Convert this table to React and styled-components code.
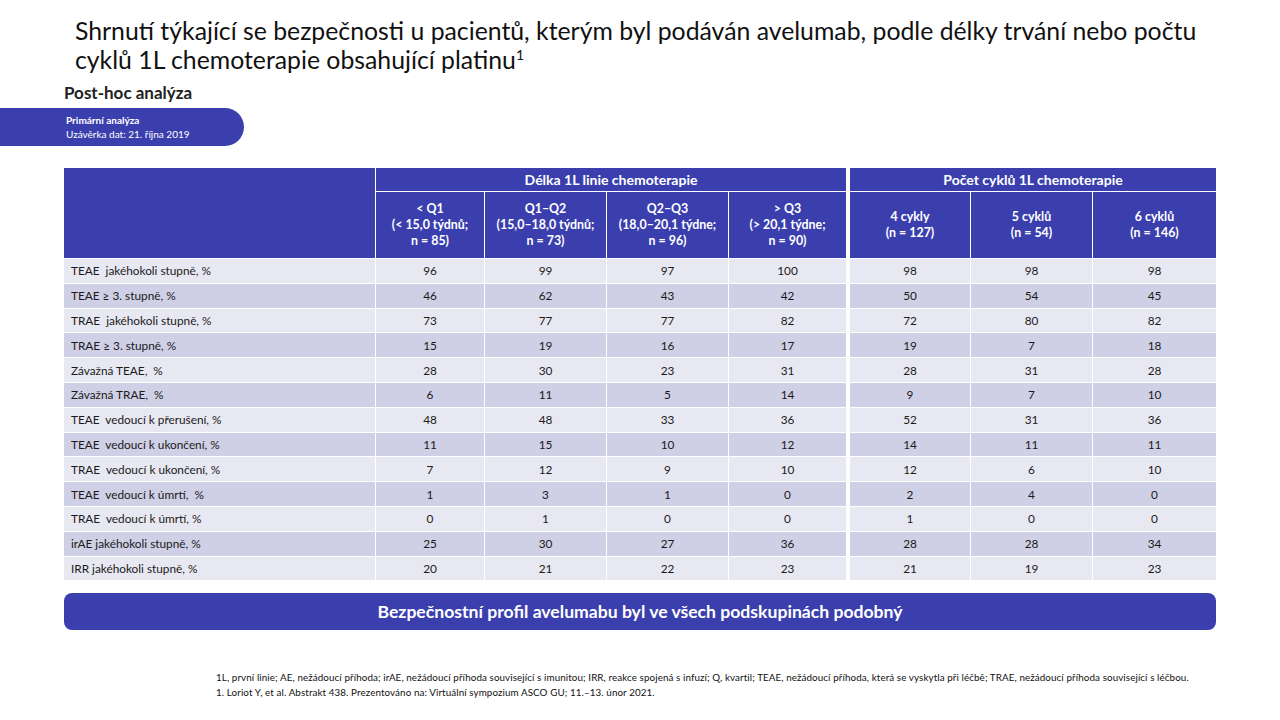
import React from 'react';
import styled, { createGlobalStyle } from 'styled-components';

const BLUE = '#3b3fae';

const GlobalStyle = createGlobalStyle`
  html, body {
    margin: 0;
    padding: 0;
    background: #fff;
  }
  body {
    font-family: Lato, "Open Sans", sans-serif;
    color: #111;
  }
`;

const Slide = styled.div`
  width: 1280px;
  height: 720px;
  position: relative;
  overflow: hidden;
  display: flex;
  flex-direction: column;
`;

const Title = styled.h1`
  margin: 16px 0 0 75px;
  font-weight: 400;
  font-size: 24.8px;
  line-height: 29px;
  white-space: nowrap;
  color: #111;

  sup {
    font-size: 14px;
    line-height: 0;
    vertical-align: 9px;
  }
`;

const Subtitle = styled.div`
  margin: 8px 0 0 64px;
  font-weight: 700;
  font-size: 17px;
  line-height: 22px;
  color: #222;
`;

const Pill = styled.div`
  margin-top: 4px;
  width: 244px;
  height: 38px;
  box-sizing: border-box;
  padding: 5px 0 0 66px;
  background: ${BLUE};
  border-radius: 0 19px 19px 0;
  color: #fff;
  font-size: 10px;
  line-height: 14px;

  b {
    font-weight: 700;
  }
`;

const Table = styled.div`
  margin: 22px 0 0 64px;
  width: 1152px;
  display: grid;
  grid-template-columns: 311px 108px 121px 121px 117px 2px 120px 121px 123px;
  grid-template-rows: 23px 66px repeat(13, 23.8px);
  gap: 1px;
  background: #fff;
`;

const HeadCell = styled.div`
  background: ${BLUE};
  color: #fff;
  font-weight: 700;
  font-size: ${p => (p.$group ? '14px' : '12.4px')};
  line-height: 16px;
  display: flex;
  align-items: center;
  justify-content: center;
  text-align: center;
  white-space: nowrap;
  grid-column: ${p => p.$col || 'auto'};
  grid-row: ${p => p.$row || 'auto'};
`;

const Spacer = styled.div`
  background: #fff;
  grid-column: ${p => p.$col || 'auto'};
  grid-row: ${p => p.$row || 'auto'};
`;

const Cell = styled.div`
  background: ${p => (p.$alt ? '#cfcfe5' : '#e8e8f2')};
  font-size: 11.8px;
  color: #1a1a1a;
  display: flex;
  align-items: center;
  justify-content: ${p => (p.$label ? 'flex-start' : 'center')};
  padding-left: ${p => (p.$label ? '7px' : '0')};
  white-space: pre;
`;

const Banner = styled.div`
  margin: 13px 0 0 64px;
  width: 1152px;
  height: 37px;
  border-radius: 8px;
  background: ${BLUE};
  color: #fff;
  font-weight: 700;
  font-size: 17.6px;
  display: flex;
  align-items: center;
  justify-content: center;
`;

const Notes = styled.div`
  margin: 40px 0 0 216px;
  font-size: 9.8px;
  line-height: 15px;
  color: #111;
  letter-spacing: 0.1px;
  white-space: nowrap;
`;

const rows = [
  ['TEAE  jakéhokoli stupně, %', 96, 99, 97, 100, 98, 98, 98],
  ['TEAE \u2265 3. stupně, %', 46, 62, 43, 42, 50, 54, 45],
  ['TRAE  jakéhokoli stupně, %', 73, 77, 77, 82, 72, 80, 82],
  ['TRAE \u2265 3. stupně, %', 15, 19, 16, 17, 19, 7, 18],
  ['Závažná TEAE,  %', 28, 30, 23, 31, 28, 31, 28],
  ['Závažná TRAE,  %', 6, 11, 5, 14, 9, 7, 10],
  ['TEAE  vedoucí k přerušení, %', 48, 48, 33, 36, 52, 31, 36],
  ['TEAE  vedoucí k ukončení, %', 11, 15, 10, 12, 14, 11, 11],
  ['TRAE  vedoucí k ukončení, %', 7, 12, 9, 10, 12, 6, 10],
  ['TEAE  vedoucí k úmrtí,  %', 1, 3, 1, 0, 2, 4, 0],
  ['TRAE  vedoucí k úmrtí, %', 0, 1, 0, 0, 1, 0, 0],
  ['irAE jakéhokoli stupně, %', 25, 30, 27, 36, 28, 28, 34],
  ['IRR jakéhokoli stupně, %', 20, 21, 22, 23, 21, 19, 23],
];

const durationCols = [
  ['< Q1', '(< 15,0 týdnů;', 'n = 85)'],
  ['Q1\u2013Q2', '(15,0\u201318,0 týdnů;', 'n = 73)'],
  ['Q2\u2013Q3', '(18,0\u201320,1 týdne;', 'n = 96)'],
  ['> Q3', '(> 20,1 týdne;', 'n = 90)'],
];

const cycleCols = [
  ['4 cykly', '(n = 127)'],
  ['5 cyklů', '(n = 54)'],
  ['6 cyklů', '(n = 146)'],
];

function Lines({ lines }) {
  return (
    <div>
      {lines.map((l, i) => (
        <div key={i}>{l}</div>
      ))}
    </div>
  );
}

export default function App() {
  return (
    <>
      <GlobalStyle />
      <Slide>
        <Title>
          Shrnutí týkající se bezpečnosti u pacientů, kterým byl podáván avelumab, podle délky trvání nebo počtu
          <br />
          cyklů 1L chemoterapie obsahující platinu<sup>1</sup>
        </Title>
        <Subtitle>Post-hoc analýza</Subtitle>
        <Pill>
          <b>Primární analýza</b>
          <div>Uzávěrka dat: 21. října 2019</div>
        </Pill>

        <Table>
          <HeadCell $col="1" $row="1 / span 2" />
          <HeadCell $group $col="2 / span 4" $row="1">Délka 1L linie chemoterapie</HeadCell>
          <Spacer $col="6" $row="1 / span 2" />
          <HeadCell $group $col="7 / span 3" $row="1">Počet cyklů 1L chemoterapie</HeadCell>
          {durationCols.map((c, i) => (
            <HeadCell key={'d' + i} $col={String(2 + i)} $row="2">
              <Lines lines={c} />
            </HeadCell>
          ))}
          {cycleCols.map((c, i) => (
            <HeadCell key={'c' + i} $col={String(7 + i)} $row="2">
              <Lines lines={c} />
            </HeadCell>
          ))}
          {rows.map((r, i) => {
            const alt = i % 2 === 1;
            return (
              <React.Fragment key={i}>
                <Cell $label $alt={alt}>{r[0]}</Cell>
                {r.slice(1, 5).map((v, j) => (
                  <Cell key={j} $alt={alt}>{v}</Cell>
                ))}
                <Spacer />
                {r.slice(5).map((v, j) => (
                  <Cell key={'b' + j} $alt={alt}>{v}</Cell>
                ))}
              </React.Fragment>
            );
          })}
        </Table>

        <Banner>Bezpečnostní profil avelumabu byl ve všech podskupinách podobný</Banner>

        <Notes>
          <div>
            1L, první linie; AE, nežádoucí příhoda; irAE, nežádoucí příhoda související s imunitou; IRR, reakce spojená s infuzí; Q, kvartil; TEAE, nežádoucí příhoda, která se vyskytla při léčbě; TRAE, nežádoucí příhoda související s léčbou.
          </div>
          <div>1. Loriot Y, et al. Abstrakt 438. Prezentováno na: Virtuální sympozium ASCO GU; 11.–13. únor 2021.</div>
        </Notes>
      </Slide>
    </>
  );
}
